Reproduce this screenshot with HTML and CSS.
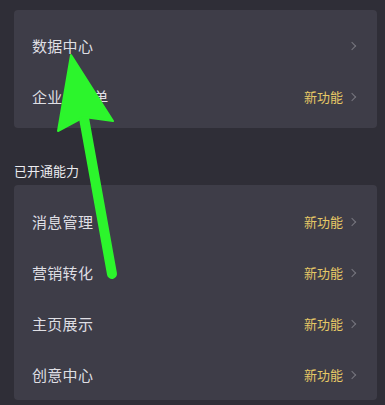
FILE: index.html
```html
<!DOCTYPE html>
<html lang="zh">
<head>
<meta charset="utf-8">
<link rel="stylesheet" href="styles.css">
</head>
<body>
<div class="page">
  <div class="card card-top">
    <div class="row"><span class="label">数据中心</span><span class="right"><span class="chev"></span></span></div>
    <div class="row"><span class="label">企业号清单</span><span class="right"><span class="new">新功能</span><span class="chev"></span></span></div>
  </div>
  <div class="section-title">已开通能力</div>
  <div class="card card-main">
    <div class="row"><span class="label">消息管理</span><span class="right"><span class="new">新功能</span><span class="chev"></span></span></div>
    <div class="row"><span class="label">营销转化</span><span class="right"><span class="new">新功能</span><span class="chev"></span></span></div>
    <div class="row"><span class="label">主页展示</span><span class="right"><span class="new">新功能</span><span class="chev"></span></span></div>
    <div class="row"><span class="label">创意中心</span><span class="right"><span class="new">新功能</span><span class="chev"></span></span></div>
  </div>
</div>
<svg class="arrow" width="385" height="405" viewBox="0 0 385 405">
  <line x1="84" y1="118" x2="112" y2="274" stroke="#2cf52c" stroke-width="10" stroke-linecap="round"/>
  <path d="M71 55 L58 131 L84 117 L113 121 Z" fill="#2cf52c" stroke="#2cf52c" stroke-width="2" stroke-linejoin="round"/>
</svg>
</body>
</html>
```

FILE: styles.css
```css
html, body {
  margin: 0;
  padding: 0;
  background: #2f2e37;
  width: 385px;
  height: 405px;
  overflow: hidden;
  font-family: "Noto Sans CJK SC", "Noto Sans", sans-serif;
}

.page {
  padding: 10px 8px 0 14px;
  display: flex;
  flex-direction: column;
}

.card {
  background: #3e3d48;
  border-radius: 4px;
  display: flex;
  flex-direction: column;
}

.card-top {
  padding: 10px 0 6px;
}

.card-main {
  padding: 11px 0 0;
}

.row {
  height: 51px;
  display: flex;
  align-items: center;
  justify-content: space-between;
  padding: 0 20px 0 18px;
}

.label {
  color: #dfdfe4;
  font-size: 15px;
  letter-spacing: 0.3px;
}

.right {
  display: flex;
  align-items: center;
  gap: 6px;
}

.new {
  color: #e6c866;
  font-size: 13px;
}

.chev {
  width: 5px;
  height: 5px;
  border-top: 1.3px solid #77767f;
  border-right: 1.3px solid #77767f;
  transform: rotate(45deg);
  margin-right: 2px;
}

.section-title {
  color: #ececf0;
  font-size: 13px;
  height: 57px;
  display: flex;
  align-items: center;
  padding-top: 27px;
  box-sizing: border-box;
}

.arrow {
  position: absolute;
  left: 0;
  top: 0;
}
```
